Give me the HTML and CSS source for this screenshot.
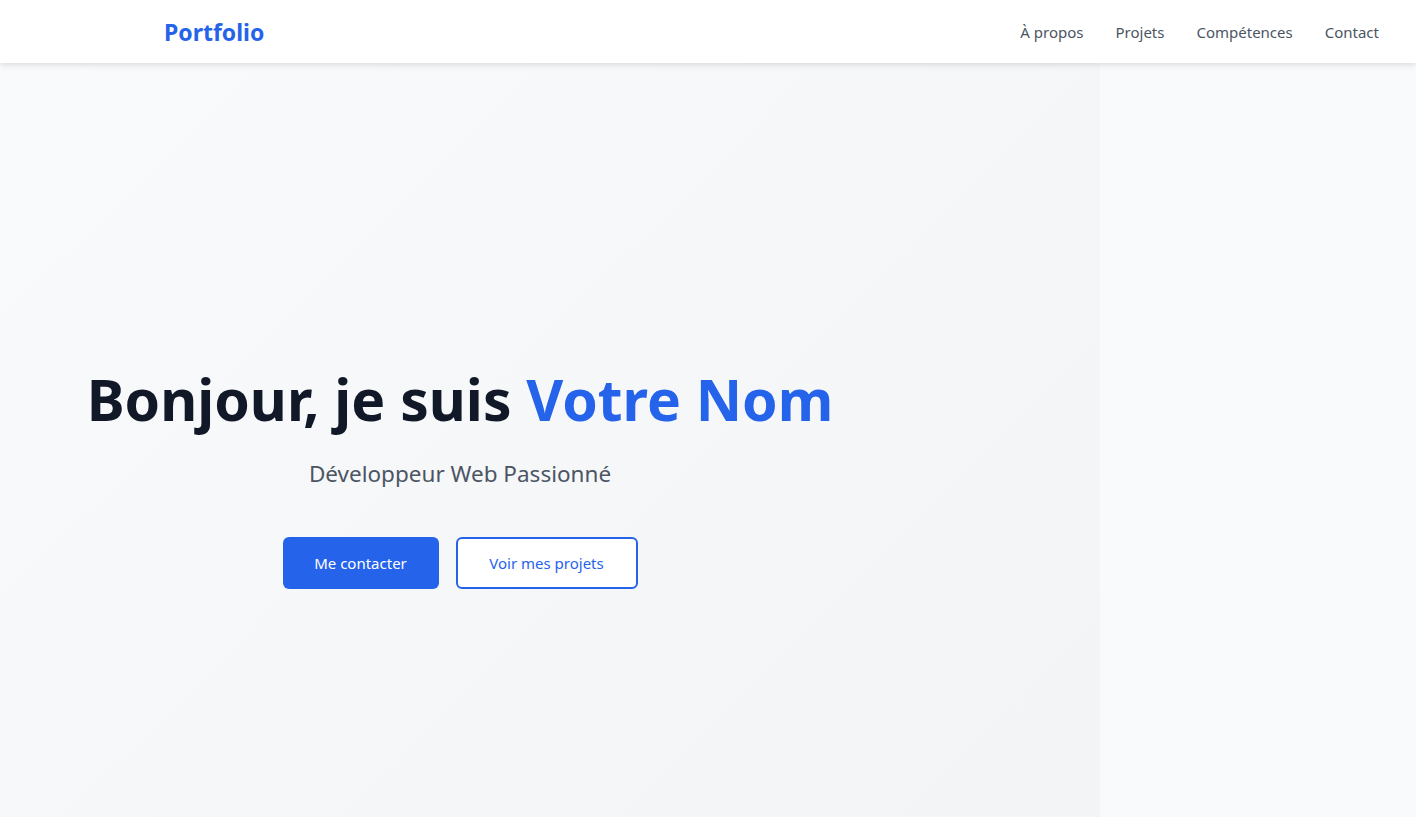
FILE: index.html
```html
<!DOCTYPE html>
<html lang="fr">
<head>
<meta charset="utf-8">
<title>Portfolio</title>
<link rel="stylesheet" href="styles.css">
</head>
<body>
<header class="site-header">
  <a class="logo" href="#">Portfolio</a>
  <nav class="nav">
    <a href="#">À propos</a>
    <a href="#">Projets</a>
    <a href="#">Compétences</a>
    <a href="#">Contact</a>
  </nav>
</header>
<main class="page">
  <section class="hero">
    <div class="hero-inner">
      <h1 class="hero-title">Bonjour, je suis <span class="accent">Votre Nom</span></h1>
      <p class="hero-subtitle">Développeur Web Passionné</p>
      <div class="hero-actions">
        <a class="btn btn-primary" href="#">Me contacter</a>
        <a class="btn btn-outline" href="#">Voir mes projets</a>
      </div>
    </div>
  </section>
</main>
</body>
</html>
```
FILE: styles.css
```css
* { box-sizing: border-box; }
html, body { margin: 0; padding: 0; }
body {
  font-family: "Noto Sans", "Open Sans", sans-serif;
  background: #f9fafb;
  color: #111827;
  overflow: hidden;
  height: 817px;
}
a { text-decoration: none; }
.site-header {
  position: relative;
  z-index: 2;
  height: 63px;
  background: #fff;
  box-shadow: 0 2px 6px rgba(0,0,0,0.12);
  display: flex;
  align-items: center;
  justify-content: space-between;
  padding: 0 37px 0 164px;
}
.logo {
  color: #2563eb;
  font-weight: 700;
  font-size: 23px;
}
.nav {
  display: flex;
  gap: 32px;
}
.nav a {
  color: #4b5563;
  font-size: 15px;
}
.page {
  display: flex;
  height: 754px;
  overflow: hidden;
}
.hero {
  width: 1100px;
  flex: none;
  height: 817px;
  background: linear-gradient(135deg, #f9fafb 0%, #f3f4f6 100%);
  display: flex;
  align-items: center;
  padding: 14px 180px 0 0;
}
.hero-inner {
  width: 100%;
  text-align: center;
}
.hero-title {
  margin: 0;
  font-size: 57px;
  line-height: 1.1;
  font-weight: 700;
  color: #111827;
}
.accent { color: #2563eb; }
.hero-subtitle {
  margin: 28px 0 0;
  font-size: 22.5px;
  color: #4b5563;
}
.hero-actions {
  margin-top: 48px;
  display: flex;
  justify-content: center;
  gap: 17px;
}
.btn {
  display: inline-flex;
  align-items: center;
  justify-content: center;
  height: 52px;
  border-radius: 6px;
  font-size: 15px;
}
.btn-primary {
  width: 156px;
  background: #2563eb;
  color: #fff;
}
.btn-outline {
  width: 182px;
  background: #fff;
  color: #2563eb;
  border: 2px solid #2563eb;
}
```
